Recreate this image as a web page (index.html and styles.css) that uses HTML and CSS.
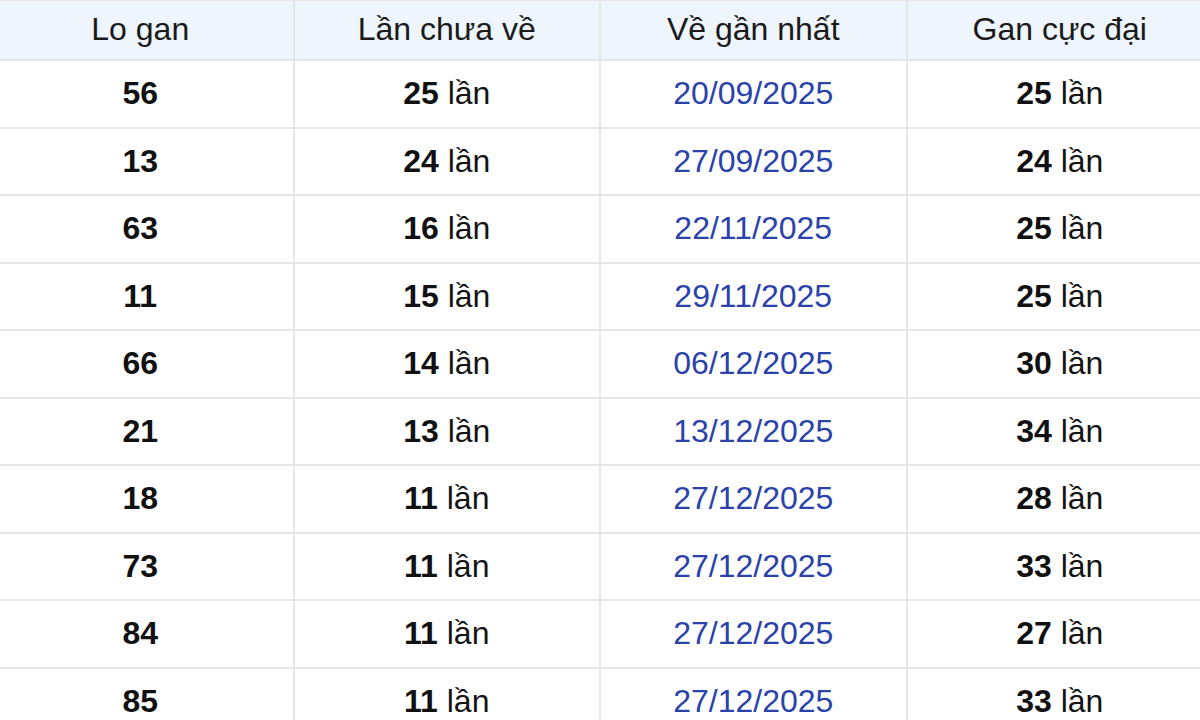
FILE: index.html
```html
<!DOCTYPE html>
<html lang="vi">
<head>
<meta charset="utf-8">
<title>Lo gan</title>
<link rel="stylesheet" href="styles.css">
</head>
<body>
<div class="frame">
<table class="gan">
<thead>
<tr><th>Lo gan</th><th>Lần chưa về</th><th>Về gần nhất</th><th>Gan cực đại</th></tr>
</thead>
<tbody>
<tr><td><b>56</b></td><td><b>25</b> lần</td><td class="date">20/09/2025</td><td><b>25</b> lần</td></tr>
<tr><td><b>13</b></td><td><b>24</b> lần</td><td class="date">27/09/2025</td><td><b>24</b> lần</td></tr>
<tr><td><b>63</b></td><td><b>16</b> lần</td><td class="date">22/11/2025</td><td><b>25</b> lần</td></tr>
<tr><td><b>11</b></td><td><b>15</b> lần</td><td class="date">29/11/2025</td><td><b>25</b> lần</td></tr>
<tr><td><b>66</b></td><td><b>14</b> lần</td><td class="date">06/12/2025</td><td><b>30</b> lần</td></tr>
<tr><td><b>21</b></td><td><b>13</b> lần</td><td class="date">13/12/2025</td><td><b>34</b> lần</td></tr>
<tr><td><b>18</b></td><td><b>11</b> lần</td><td class="date">27/12/2025</td><td><b>28</b> lần</td></tr>
<tr><td><b>73</b></td><td><b>11</b> lần</td><td class="date">27/12/2025</td><td><b>33</b> lần</td></tr>
<tr><td><b>84</b></td><td><b>11</b> lần</td><td class="date">27/12/2025</td><td><b>27</b> lần</td></tr>
<tr><td><b>85</b></td><td><b>11</b> lần</td><td class="date">27/12/2025</td><td><b>33</b> lần</td></tr>
</tbody>
</table>
</div>
</body>
</html>
```
FILE: styles.css
```css
html, body {
  margin: 0;
  padding: 0;
  background: #ffffff;
}
.frame {
  width: 1200px;
  height: 720px;
  overflow: hidden;
}
.gan {
  margin-left: -14px;
  margin-top: -1px;
  width: 1228px;
  border-collapse: collapse;
  table-layout: fixed;
  font-family: "Liberation Sans", Arial, sans-serif;
  font-size: 32px;
  color: #141414;
}
.gan th,
.gan td {
  border: 2px solid #e6e6e6;
  text-align: center;
  vertical-align: middle;
  padding: 0;
}
.gan th {
  height: 56px;
  padding-bottom: 2px;
  font-weight: normal;
  background: #eef5fd;
  color: #1a1a1a;
}
.gan td {
  height: 65.5px;
}
.gan b {
  font-weight: bold;
  color: #111111;
}
.gan .date {
  color: #2a42aa;
}
```
